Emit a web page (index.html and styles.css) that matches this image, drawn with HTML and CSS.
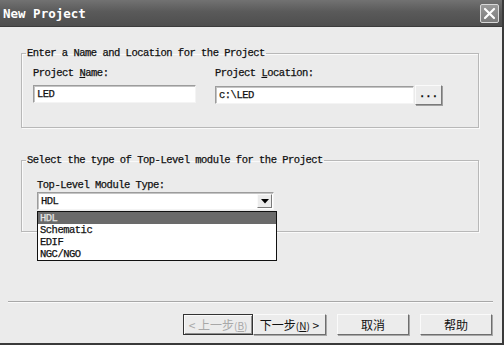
FILE: index.html
```html
<!DOCTYPE html>
<html lang="en">
<head>
    <meta charset="UTF-8">
    <title>New Project</title>
    <link rel="stylesheet" href="styles.css">
</head>
<body>
    <div class="window">
        <div class="titlebar">
            <span class="title">New Project</span>
            <div class="close">
                <svg width="13" height="13" viewBox="0 0 13 13">
                    <path d="M2 2 L11 11 M11 2 L2 11" stroke="#fff" stroke-width="2.2" stroke-linecap="round"/>
                </svg>
            </div>
        </div>

        <div class="content">
            <fieldset class="group group-name">
                <legend>Enter a Name and Location for the Project</legend>
                <div class="row">
                    <div class="field field-name">
                        <label>Project <u>N</u>ame:</label>
                        <div class="textbox">LED</div>
                    </div>
                    <div class="field field-location">
                        <label>Project <u>L</u>ocation:</label>
                        <div class="location-row">
                            <div class="textbox textbox-location">c:\LED</div>
                            <button type="button" class="browse">...</button>
                        </div>
                    </div>
                </div>
            </fieldset>

            <fieldset class="group group-type">
                <legend>Select the type of Top-Level module for the Project</legend>
                <label>Top-Level Module Type:</label>
                <div class="combo">
                    <div class="combo-value">HDL</div>
                    <div class="combo-arrow">
                        <svg width="8" height="5" viewBox="0 0 8 5"><path d="M0 0 H8 L4 4.5 Z" fill="#000"/></svg>
                    </div>
                    <ul class="combo-list">
                        <li class="selected">HDL</li>
                        <li>Schematic</li>
                        <li>EDIF</li>
                        <li>NGC/NGO</li>
                    </ul>
                </div>
            </fieldset>
        </div>

        <div class="separator"></div>

        <div class="buttons">
            <div class="pair">
                <button type="button" class="btn btn-back" disabled>&lt;&nbsp;上一步<span class="key">(<u>B</u>)</span></button>
                <button type="button" class="btn btn-next">下一步<span class="key">(<u>N</u>)</span>&nbsp;&gt;</button>
            </div>
            <button type="button" class="btn">取消</button>
            <button type="button" class="btn">帮助</button>
        </div>
    </div>
</body>
</html>
```

FILE: styles.css
```css
* {
    box-sizing: border-box;
}

body {
    margin: 0;
    background-color: #ebebeb;
    font-family: "Liberation Mono", "DejaVu Sans Mono", "Noto Sans CJK SC", monospace;
    font-size: 10.5px;
    letter-spacing: -0.5px;
    color: #111;
    -webkit-text-stroke: 0.25px #111;
}

.window {
    width: 504px;
    height: 345px;
    display: flex;
    flex-direction: column;
    background-color: #ebebeb;
    border-right: 2px solid #3a3a3a;
    border-bottom: 2px solid #3a3a3a;
}

.titlebar {
    height: 27px;
    flex-shrink: 0;
    display: flex;
    align-items: center;
    justify-content: space-between;
    padding: 0 3px 0 3px;
    background: linear-gradient(#727272, #5a5a5a 45%, #4e4e4e);
    border-bottom: 1px solid #3c3c3c;
}

.title {
    color: #fff;
    -webkit-text-stroke: 0;
    font-family: "DejaVu Sans Mono", monospace;
    font-weight: bold;
    font-size: 12.5px;
    letter-spacing: 0;
}

.close {
    width: 19px;
    height: 19px;
    display: flex;
    align-items: center;
    justify-content: center;
    border: 1px solid #d8d8d8;
    border-radius: 2px;
    background: linear-gradient(#9a9a9a, #7c7c7c);
}

.content {
    padding: 20px 0 0 21px;
}

.group {
    width: 458px;
    margin: 0;
    border: 1px solid #b8b8b8;
    box-shadow: 1px 1px 0 #fafafa, inset 1px 1px 0 #fafafa;
    padding: 8px 0 22px 11px;
}

.group legend {
    padding: 0 1px;
    margin-left: -7px;
    line-height: 12px;
}

.group label {
    display: block;
    line-height: 12px;
    margin-bottom: 6px;
}

.row {
    display: flex;
    gap: 19px;
}

.textbox {
    height: 18px;
    line-height: 14px;
    padding: 1px 3px;
    background-color: #fff;
    border: 1px solid #9c9c9c;
    border-right-color: #f4f4f4;
    border-bottom-color: #f4f4f4;
    box-shadow: inset 1px 1px 0 #c4c4c4;
}

.field-name .textbox {
    width: 163px;
}

.location-row {
    display: flex;
    align-items: center;
    gap: 1px;
}

.textbox-location {
    width: 199px;
}

.browse {
    width: 27px;
    height: 20px;
    padding: 0 0 3px;
    font: inherit;
    font-weight: bold;
    background-color: #ececec;
    border: 1px solid #fafafa;
    border-right-color: #7a7a7a;
    border-bottom-color: #7a7a7a;
    box-shadow: 1px 1px 0 #a0a0a0;
}

.group-type {
    margin-top: 26px;
    padding: 13px 0 21px 15px;
}

.group-type legend {
    margin-left: -11px;
}

.group-type label {
    margin-bottom: 1px;
}

.combo {
    position: relative;
    width: 237px;
    height: 18px;
    display: flex;
    background-color: #fff;
    border: 1px solid #9c9c9c;
    border-right-color: #f4f4f4;
    border-bottom-color: #f4f4f4;
    box-shadow: inset 1px 1px 0 #c4c4c4;
}

.combo-value {
    flex: 1;
    line-height: 14px;
    padding: 1px 3px;
}

.combo-arrow {
    width: 15px;
    margin: 1px;
    display: flex;
    align-items: center;
    justify-content: center;
    background-color: #ececec;
    border: 1px solid #fafafa;
    border-right-color: #7a7a7a;
    border-bottom-color: #7a7a7a;
}

.combo-list {
    position: absolute;
    top: 18px;
    left: -1px;
    width: 240px;
    margin: 0;
    padding: 0;
    list-style: none;
    background-color: #fff;
    border: 1px solid #111;
}

.combo-list li {
    height: 12px;
    line-height: 12px;
    padding: 0 2px;
}

.combo-list .selected {
    background-color: #6a6a6a;
    color: #e4e4e4;
    -webkit-text-stroke: 0.25px #e4e4e4;
}

.separator {
    margin: auto 9px 0 8px;
    border-top: 1px solid #a8a8a8;
    border-bottom: 1px solid #fafafa;
}

.buttons {
    display: flex;
    justify-content: flex-end;
    gap: 11px;
    padding: 11px 10px 8px 0;
}

.pair {
    display: flex;
}

.btn {
    width: 72px;
    height: 21px;
    padding: 0;
    font-family: "Noto Sans CJK SC", sans-serif;
    font-size: 12px;
    letter-spacing: 0;
    -webkit-text-stroke: 0;
    color: #111;
    background-color: #ececec;
    border: 1px solid #fafafa;
    border-right-color: #6e6e6e;
    border-bottom-color: #6e6e6e;
    box-shadow: 1px 1px 0 #a8a8a8;
}

.btn-back {
    width: 70px;
    color: #a8a8a8;
    border: 1px solid #333;
    box-shadow: inset 1px 1px 0 #fafafa, inset -1px -1px 0 #909090;
}

.btn-next {
    width: 73px;
}

.key {
    font-size: 10px;
}
```
